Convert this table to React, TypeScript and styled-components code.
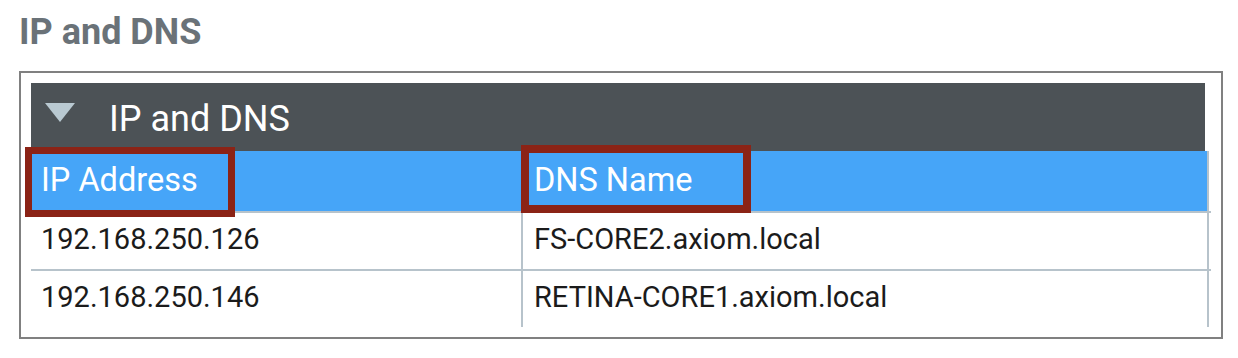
import React from "react";
import styled, { createGlobalStyle } from "styled-components";

const GlobalStyle = createGlobalStyle`
  html, body {
    margin: 0;
    padding: 0;
    background: #ffffff;
  }
  body {
    font-family: Roboto, "Liberation Sans", Arial, sans-serif;
  }
  * { box-sizing: border-box; }
`;

const Page = styled.div`
  padding: 14px 0 0 19px;
  width: 1238px;
  height: 358px;
  overflow: hidden;
`;

const Title = styled.h2`
  margin: 0;
  font-size: 36px;
  line-height: 36px;
  font-weight: 700;
  color: #6a7278;
`;

const Frame = styled.div`
  margin-top: 21px;
  width: 1204px;
  border: 2px solid #808080;
  padding: 10px 10px 10px 10px;
`;

const SectionBar = styled.div`
  display: flex;
  align-items: center;
  height: 68px;
  margin-right: 6px;
  padding-left: 14px;
  background: #4c5256;
  color: #ffffff;
`;

const Caret = styled.svg`
  flex: none;
  width: 30px;
  height: 19px;
  margin-top: -9px;
  margin-right: 34px;
`;

const SectionTitle = styled.span`
  font-size: 36px;
  line-height: 36px;
  padding-top: 3px;
`;

const Table = styled.div`
  display: flex;
  flex-direction: column;
`;

const Row = styled.div<{ $last?: boolean }>`
  display: grid;
  grid-template-columns: 492px 1fr;
  padding-right: 2px;
  border-bottom: ${(p) => (p.$last ? "none" : "2px solid #b7c3cb")};
`;

const HeadCell = styled.div<{ $edge?: boolean }>`
  position: relative;
  display: flex;
  align-items: center;
  height: 60px;
  padding: 0 0 3px ${(p) => (p.$edge ? "11px" : "10px")};
  background: #46a5f8;
  color: #ffffff;
  font-size: 32.5px;
  border-right: ${(p) => (p.$edge ? "2px solid #b7c3cb" : "none")};
`;

const Cell = styled.div<{ $edge?: boolean }>`
  display: flex;
  align-items: center;
  height: 56px;
  padding: 0 0 4px ${(p) => (p.$edge ? "11px" : "10px")};
  font-size: 29px;
  color: #1b1b1b;
  border-right: 2px solid #b7c3cb;
`;

const Highlight = styled.div<{ $l: number; $t: number; $w: number; $h: number; $b: number }>`
  position: absolute;
  left: ${(p) => p.$l}px;
  top: ${(p) => p.$t}px;
  width: ${(p) => p.$w}px;
  height: ${(p) => p.$h}px;
  border: ${(p) => p.$b}px solid #8b2316;
  pointer-events: none;
`;

const rows = [
  { ip: "192.168.250.126", dns: "FS-CORE2.axiom.local" },
  { ip: "192.168.250.146", dns: "RETINA-CORE1.axiom.local" },
];

export default function App() {
  return (
    <>
      <GlobalStyle />
      <Page>
        <Title>IP and DNS</Title>
        <Frame>
          <SectionBar>
            <Caret viewBox="0 0 30 19">
              <polygon points="0,0 30,0 15,19" fill="#b9c9d1" />
            </Caret>
            <SectionTitle>IP and DNS</SectionTitle>
          </SectionBar>
          <Table>
            <Row>
              <HeadCell>
                IP Address
                <Highlight $l={-6} $t={-4} $w={210} $h={70} $b={7} />
              </HeadCell>
              <HeadCell $edge>
                DNS Name
                <Highlight $l={-2} $t={-6} $w={230} $h={68} $b={8} />
              </HeadCell>
            </Row>
            {rows.map((r, i) => (
              <Row key={r.ip} $last={i === rows.length - 1}>
                <Cell>{r.ip}</Cell>
                <Cell $edge>{r.dns}</Cell>
              </Row>
            ))}
          </Table>
        </Frame>
      </Page>
    </>
  );
}
